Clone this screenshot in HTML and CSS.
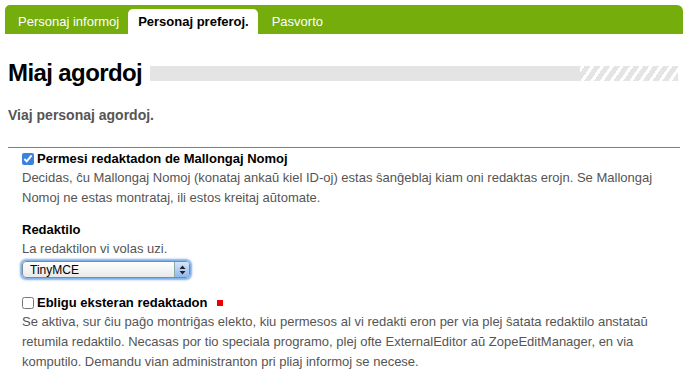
FILE: index.html
```html
<!DOCTYPE html>
<html>
<head>
  <meta charset="UTF-8">
  <title>Miaj agordoj</title>
  <link rel="stylesheet" href="styles.css">
</head>
<body>
  <div class="langetoj">
    <a class="langeto">Personaj informoj</a>
    <a class="langeto aktiva">Personaj preferoj.</a>
    <a class="langeto">Pasvorto</a>
  </div>

  <div class="titolo">
    <h1>Miaj agordoj</h1>
    <div class="strio"></div>
  </div>

  <p class="priskribo">Viaj personaj agordoj.</p>

  <form class="agordoj">
    <div class="kampo">
      <label class="etikedo"><input type="checkbox" checked> Permesi redaktadon de Mallongaj Nomoj</label>
      <div class="helpo">Decidas, ĉu Mallongaj Nomoj (konataj ankaŭ kiel ID-oj) estas ŝanĝeblaj kiam oni redaktas erojn. Se Mallongaj Nomoj ne estas montrataj, ili estos kreitaj aŭtomate.</div>
    </div>

    <div class="kampo">
      <div class="etikedo">Redaktilo</div>
      <div class="helpo">La redaktilon vi volas uzi.</div>
      <div class="elektilo">
        <select>
          <option>TinyMCE</option>
        </select>
        <span class="sagoj">
          <svg width="7" height="10" viewBox="0 0 7 10"><path d="M3.5 0.5 L6.5 4 H0.5 Z M3.5 9.5 L6.5 6 H0.5 Z" fill="#222"/></svg>
        </span>
      </div>
    </div>

    <div class="kampo">
      <label class="etikedo"><input type="checkbox"> Ebligu eksteran redaktadon <span class="deviga"></span></label>
      <div class="helpo">Se aktiva, sur ĉiu paĝo montriĝas elekto, kiu permesos al vi redakti eron per via plej ŝatata redaktilo anstataŭ retumila redaktilo. Necasas por tio speciala programo, plej ofte ExternalEditor aŭ ZopeEditManager, en via komputilo. Demandu vian administranton pri pliaj informoj se necese.</div>
    </div>
  </form>
</body>
</html>
```

FILE: styles.css
```css
body {
  margin: 0;
  font-family: "Liberation Sans", Arial, sans-serif;
  font-size: 13px;
  color: #000;
  background: #fff;
}

.langetoj {
  display: flex;
  align-items: flex-end;
  height: 29px;
  margin: 5px 2px 0 5px;
  padding-left: 8px;
  background: #74ad0c;
  border-radius: 5px 6px 0 0;
}
.langeto {
  display: block;
  padding: 0 4px 0 5px;
  line-height: 25px;
  color: #fff;
  font-size: 13px;
}
.langeto.aktiva {
  margin: 0 2px 0 5px;
  padding: 0 9px 0 10px;
  background: #fff;
  color: #000;
  font-weight: bold;
  border-radius: 5px 5px 0 0;
}
.langeto.aktiva + .langeto { padding-left: 12px; }

.titolo {
  display: flex;
  align-items: center;
  margin: 25px 7px 0 8px;
}
.titolo h1 {
  margin: 0;
  font-size: 24px;
  letter-spacing: -0.6px;
  line-height: 28px;
}
.strio {
  flex: 1;
  height: 15px;
  margin: 1px 0 0 8px;
  background:
    repeating-linear-gradient(-55deg, #e4e4e4 0 5px, #fff 5px 8px) right / 98px 15px no-repeat,
    linear-gradient(#e4e4e4, #e4e4e4) left / calc(100% - 98px) 15px no-repeat;
}

.priskribo {
  margin: 20px 8px 0;
  font-weight: bold;
  color: #555;
  font-size: 14px;
}

.agordoj {
  margin: 24px 5px 0 8px;
  border-top: 1px solid #3399cc;
  padding: 2px 0 0 14px;
}
.kampo { margin-bottom: 13px; }
.etikedo {
  display: flex;
  align-items: center;
  gap: 3px;
  font-weight: bold;
  line-height: 18px;
}
.etikedo input {
  margin: 0;
  width: 12px;
  height: 12px;
  accent-color: #3b82e0;
}
.helpo {
  color: #555;
  line-height: 20px;
  padding-right: 8px;
}
.deviga {
  width: 6px;
  height: 6px;
  margin-left: 6px;
  background: #e00;
}

.elektilo {
  display: flex;
  width: 166px;
  height: 15px;
  margin: 2px 0 16px;
  border: 1px solid #7a8aa0;
  border-radius: 4px;
  background: linear-gradient(#fff, #e9e9e9);
  box-shadow: 0 0 2px 2px #7eaee6;
}
.elektilo select {
  flex: 1;
  appearance: none;
  border: 0;
  background: transparent;
  font-family: "Liberation Sans", Arial, sans-serif;
  font-size: 12px;
  padding: 0 0 0 7px;
  outline: none;
}
.sagoj {
  display: flex;
  align-items: center;
  justify-content: center;
  width: 14px;
  border-left: 1px solid #8aa;
  border-radius: 0 3px 3px 0;
  background: linear-gradient(#d6e6fb, #8fb8ee);
}
```
